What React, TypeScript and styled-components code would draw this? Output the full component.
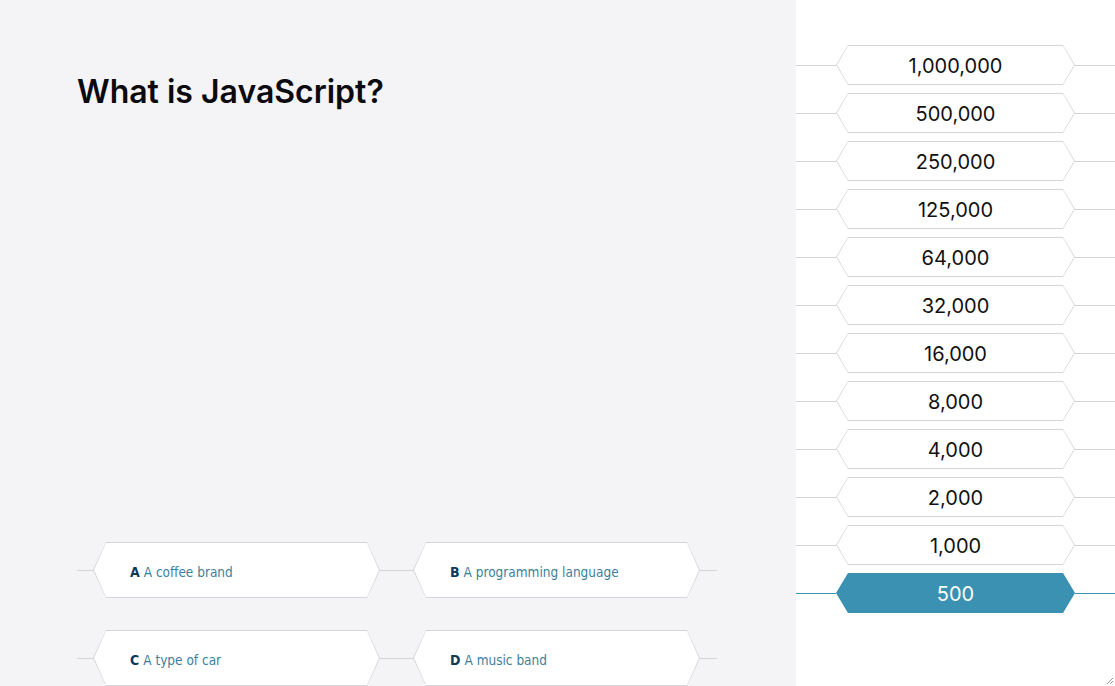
import React from "react";
import styled, { createGlobalStyle } from "styled-components";

const Global = createGlobalStyle`
  html, body { margin: 0; padding: 0; }
  body { font-family: Inter, "Liberation Sans", sans-serif; background: #fff; }
  * { box-sizing: border-box; }
`;

const Page = styled.div`
  display: grid;
  grid-template-columns: 796px 1fr;
  height: 686px;
  overflow: hidden;
  position: relative;
`;

const QuestionPanel = styled.div`
  background: #f4f4f6;
  display: flex;
  flex-direction: column;
  padding: 72px 79px 0 77px;
  overflow: hidden;
`;

const Title = styled.h1`
  margin: 0;
  font-family: Inter, "Liberation Sans", sans-serif;
  font-size: 32px;
  font-weight: 600;
  line-height: 40px;
  color: #0b0b0f;
`;

const AnswerGrid = styled.div`
  margin-top: auto;
  display: grid;
  grid-template-columns: 320px 320px;
  row-gap: 32px;
  height: 144px;
`;

const Slot = styled.div`
  display: flex;
  align-items: center;
  height: 56px;
`;

const Wire = styled.div<{ $active?: boolean; $w?: number }>`
  height: 1px;
  background: ${(p) => (p.$active ? "#3a91b1" : "#d4d4d8")};
  ${(p) => (p.$w ? `width: ${p.$w}px;` : "flex: 1;")}
  flex-shrink: 0;
`;

const hex = (i: number) =>
  `polygon(${i}px 0, calc(100% - ${i}px) 0, 100% 50%, calc(100% - ${i}px) 100%, ${i}px 100%, 0 50%)`;

const AnswerFrame = styled.div`
  width: 287px;
  height: 56px;
  background: #d4d4d8;
  clip-path: ${hex(13)};
  padding: 1px;
  flex-shrink: 0;
`;

const AnswerFace = styled.button`
  width: 100%;
  height: 100%;
  border: 0;
  margin: 0;
  background: #fff;
  clip-path: ${hex(12)};
  display: flex;
  align-items: center;
  padding: 4px 0 0 36px;
  font-family: "DejaVu Sans Condensed", "DejaVu Sans", sans-serif;
  font-size: 13.5px;
  color: #3d7f9b;
  cursor: pointer;
  text-align: left;
`;

const Letter = styled.b`
  color: #0e3a5a;
  font-weight: 700;
  font-size: 14px;
  margin-right: 4px;
`;

const LadderPanel = styled.div`
  background: #fff;
  display: flex;
  flex-direction: column;
  gap: 8px;
  padding-top: 45px;
`;

const Rung = styled.div`
  display: flex;
  align-items: center;
  height: 40px;
`;

const RungFrame = styled.div<{ $active?: boolean }>`
  width: 239px;
  height: 40px;
  flex-shrink: 0;
  background: ${(p) => (p.$active ? "#3a91b1" : "#d4d4d8")};
  clip-path: ${hex(12)};
  padding: 1px;
`;

const RungFace = styled.div<{ $active?: boolean }>`
  width: 100%;
  height: 100%;
  background: ${(p) => (p.$active ? "#3a91b1" : "#fff")};
  clip-path: ${hex(11)};
  display: flex;
  align-items: center;
  justify-content: center;
  padding-top: 2px;
  font-family: Inter, "Liberation Sans", sans-serif;
  font-size: 20px;
  color: ${(p) => (p.$active ? "#fff" : "#111")};
`;

const Grip = styled.svg`
  position: absolute;
  right: 1px;
  bottom: 1px;
  width: 8px;
  height: 8px;
`;

const answers = [
  ["A", "A coffee brand"],
  ["B", "A programming language"],
  ["C", "A type of car"],
  ["D", "A music band"],
];

const prizes = [
  "1,000,000",
  "500,000",
  "250,000",
  "125,000",
  "64,000",
  "32,000",
  "16,000",
  "8,000",
  "4,000",
  "2,000",
  "1,000",
  "500",
];

export default function App() {
  return (
    <>
      <Global />
      <Page>
        <QuestionPanel>
          <Title>What is JavaScript?</Title>
          <AnswerGrid>
            {answers.map(([l, t]) => (
              <Slot key={l}>
                <Wire $w={16} />
                <AnswerFrame>
                  <AnswerFace>
                    <Letter>{l}</Letter>
                    {t}
                  </AnswerFace>
                </AnswerFrame>
                <Wire $w={17} />
              </Slot>
            ))}
          </AnswerGrid>
        </QuestionPanel>
        <LadderPanel>
          {prizes.map((p) => {
            const active = p === "500";
            return (
              <Rung key={p}>
                <Wire $active={active} />
                <RungFrame $active={active}>
                  <RungFace $active={active}>{p}</RungFace>
                </RungFrame>
                <Wire $active={active} />
              </Rung>
            );
          })}
        </LadderPanel>
        <Grip viewBox="0 0 8 8">
          <path d="M7 1 L1 7 M7 4 L4 7" stroke="#9a9a9a" strokeWidth="1" />
        </Grip>
      </Page>
    </>
  );
}
